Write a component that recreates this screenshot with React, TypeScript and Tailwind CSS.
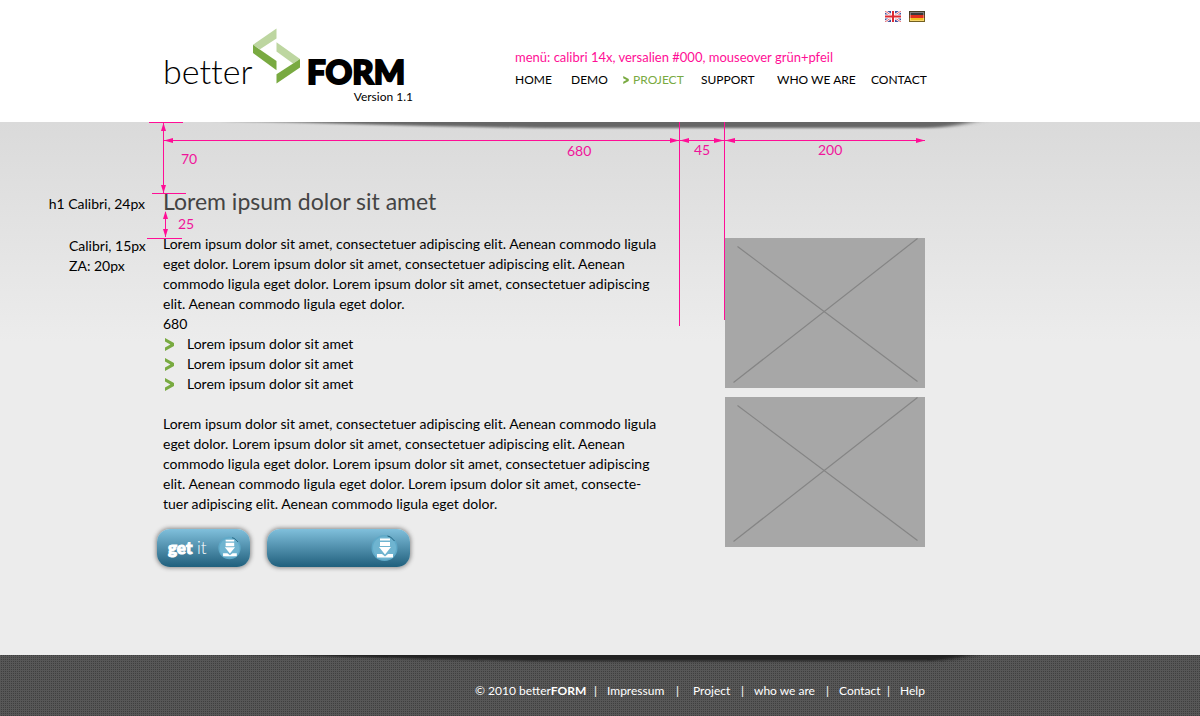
import type { ReactNode } from "react";

const PINK = "#ff0e96";

function Logo() {
  return (
    <a href="#home" aria-label="betterFORM" className="block text-black">
      <div className="flex items-end text-[34px] leading-[34px]">
        <span className="w-[90px] font-light whitespace-nowrap [font-variant-ligatures:none]">better</span>
        <svg viewBox="0 0 47 56" className="mb-[4px] h-[56px] w-[47px] shrink-0" aria-hidden="true">
          <path d="M23.5 0.5V10.5L7 21.2L0 16.8Z" fill="#bdd6a0" />
          <path d="M0 16.8L23.5 33V42.2L0 25Z" fill="#79aa41" />
          <path d="M23.5 14.2L47 31L40 35.5L23.5 23.5Z" fill="#bdd6a0" />
          <path d="M47 31V39.5L23.5 55.5V46.2Z" fill="#79aa41" />
        </svg>
        <span className="ml-[7px] text-[33px] font-black [-webkit-text-stroke:2px_#000]">FORM</span>
      </div>
      <div className="text-right text-[12px] leading-[18px]">Version 1.1</div>
    </a>
  );
}

function BritishFlag() {
  return (
    <svg viewBox="0 0 16 11" className="h-[11px] w-[16px]" aria-hidden="true">
      <rect width="16" height="11" fill="#3f4f9e" />
      <path d="M0 0L16 11M16 0L0 11" stroke="#fff" strokeWidth="2.4" />
      <path d="M0 0L16 11M16 0L0 11" stroke="#e0404a" strokeWidth="0.8" />
      <path d="M8 0V11M0 5.5H16" stroke="#fff" strokeWidth="4" />
      <path d="M8 0V11M0 5.5H16" stroke="#dd2a33" strokeWidth="2" />
    </svg>
  );
}

function GermanFlag() {
  return (
    <svg viewBox="0 0 16 11" className="h-[11px] w-[16px]" aria-hidden="true">
      <rect width="16" height="4" fill="#3a3a3a" />
      <rect y="4" width="16" height="3" fill="#e0301c" />
      <rect y="7" width="16" height="4" fill="#f0c020" />
      <rect x="0.5" y="0.5" width="15" height="10" fill="none" stroke="#4a4020" strokeOpacity="0.75" />
      <rect x="1.5" y="1.5" width="13" height="8" fill="none" stroke="#fff" strokeOpacity="0.35" />
    </svg>
  );
}

function Chevron({ className }: { className: string }) {
  return (
    <svg viewBox="0 0 9 13" className={className} aria-hidden="true">
      <path d="M0 0L9 5V8L0 13V9.4L5.4 6.5L0 3.6Z" fill="#79aa41" />
    </svg>
  );
}

function EdgeShadow({ id, color }: { id: string; color: string }) {
  return (
    <svg viewBox="0 0 1200 12" className="pointer-events-none absolute top-0 left-0 h-[12px] w-[1200px]" aria-hidden="true">
      <defs>
        <filter id={id} x="-5%" y="-100%" width="110%" height="300%">
          <feGaussianBlur stdDeviation="8 1" />
        </filter>
      </defs>
      <path d="M225 -8V-1L300 0.5Q400 4 540 6H930Q955 5 975 -1V-8Z" fill={color} filter={"url(#" + id + ")"} />
    </svg>
  );
}

function Dimensions() {
  return (
    <div className="pointer-events-none absolute top-0 left-0 text-[14px] leading-[20px] text-[#f0149a]">
      <svg viewBox="0 0 940 210" className="h-[210px] w-[940px]" aria-hidden="true">
        <g stroke={PINK} fill="none" shapeRendering="crispEdges">
          <path d="M149 0.5H183M152 71.5H186M147 116.5H182" />
          <path d="M163.5 1V71M165.5 90V115M163 18.5H925" />
          <path d="M679.5 0V204" />
          <path d="M724.5 0V198" />
        </g>
        <g fill={PINK}>
          <path d="M163.5 1L166 9H161ZM163.5 71L166 63H161Z" />
          <path d="M165.5 89L168 97H163ZM165.5 115L168 107H163Z" />
          <path d="M164 18.5L173 16V21ZM679 18.5L670 16V21Z" />
          <path d="M680 18.5L689 16V21ZM724 18.5L714 16V21Z" />
          <path d="M725 18.5L735 16V21ZM925 18.5L916 16V21Z" />
        </g>
      </svg>
      <span className="absolute top-[27px] left-[181px]">70</span>
      <span className="absolute top-[92px] left-[178px]">25</span>
      <span className="absolute top-[19px] left-[567px]">680</span>
      <span className="absolute top-[18px] left-[694px]">45</span>
      <span className="absolute top-[18px] left-[818px]">200</span>
    </div>
  );
}

function Placeholder() {
  return (
    <svg viewBox="0 0 200 150" className="block h-[150px] w-[200px] bg-[#a7a7a7]" role="img" aria-label="Placeholder">
      <path d="M12.5 8.5L192.5 143.5M8.5 144.5L192.5 0.5" stroke="#858585" strokeWidth="1.2" />
    </svg>
  );
}

function DownloadIcon({ className }: { className: string }) {
  return (
    <svg viewBox="0 0 26 28" className={className} aria-hidden="true">
      <circle cx="13" cy="14" r="13" fill="#5fa9c8" />
      <circle cx="13" cy="14" r="11.5" fill="#6fb4d0" />
      <path d="M16 2L19 3L23 7" stroke="#245f7a" strokeWidth="1" fill="none" />
      <path
        d="M8.5 4.5H18.5V6.5H8.5ZM8.5 8H18.5V12H8.5ZM7.5 13H19.5L13.5 20.5ZM5.5 20H10.5L13.5 22.5L16.5 20H21.5V23.5H5.5Z"
        fill="#fff"
      />
    </svg>
  );
}

function PillButton({ label, className, children }: { label: string; className: string; children: ReactNode }) {
  return (
    <button
      type="button"
      aria-label={label}
      className={
        "flex h-[38px] items-center rounded-[13px] bg-linear-to-b from-[#80c0dc] to-[#1f607d] text-white shadow-[0_0_4px_1px_#8a8a8a] " +
        className
      }
    >
      {children}
    </button>
  );
}

const navLinks = ["HOME", "DEMO", "PROJECT", "SUPPORT", "WHO WE ARE", "CONTACT"];
const listItems = [1, 2, 3];

export default function App() {
  return (
    <div className="flex min-h-screen flex-col overflow-x-hidden bg-[#ececec] font-['Lato','Liberation_Sans',sans-serif] text-black">
      <header className="h-[122px] bg-white">
        <div className="flex max-w-[925px] justify-between pl-[163px]">
          <div className="w-[250px] shrink-0 pt-[28px]">
            <Logo />
          </div>
          <div className="w-[410px] shrink-0 pt-[11px]">
            <div className="flex justify-end gap-[8px]">
              <a href="#en" aria-label="English">
                <BritishFlag />
              </a>
              <a href="#de" aria-label="Deutsch">
                <GermanFlag />
              </a>
            </div>
            <p className="mt-[24px] text-[13px] leading-[22px] whitespace-nowrap text-[#ff0e96]">
              menü: calibri 14x, versalien #000, mouseover grün+pfeil
            </p>
            <nav className="grid grid-cols-[56px_52px_78px_76px_94px_54px] text-[12px] leading-[24px] whitespace-nowrap">
              {navLinks.map((name) =>
                name === "PROJECT" ? (
                  <a key={name} href="#project" className="flex items-center gap-[4px] text-[#79aa41]">
                    <Chevron className="h-[8px] w-[6px]" />
                    {name}
                  </a>
                ) : (
                  <a key={name} href="#page">
                    {name}
                  </a>
                ),
              )}
            </nav>
          </div>
        </div>
      </header>

      <main className="relative flex-1 bg-[linear-gradient(#dadada,#ececec_220px)] pb-[88px]">
        <EdgeShadow id="top-shadow" color="#666666" />
        <div className="grid max-w-[925px] grid-cols-[163px_1fr_200px] pt-[66px] text-[14px] leading-[20px]">
          <p className="pt-[6px] pr-[18px] text-right">h1 Calibri, 24px</p>
          <h1 className="col-span-2 h-[46px] text-[23px] leading-[26px] text-[#444444]">Lorem ipsum dolor sit amet</h1>

          <p className="pt-[2px] pl-[69px]">
            Calibri, 15px
            <br />
            ZA: 20px
          </p>
          <div className="whitespace-nowrap">
            <p>
              Lorem ipsum dolor sit amet, consectetuer adipiscing elit. Aenean commodo ligula
              <br />
              eget dolor. Lorem ipsum dolor sit amet, consectetuer adipiscing elit. Aenean
              <br />
              commodo ligula eget dolor. Lorem ipsum dolor sit amet, consectetuer adipiscing
              <br />
              elit. Aenean commodo ligula eget dolor.
              <br />
              680
            </p>
            <ul>
              {listItems.map((n) => (
                <li key={n} className="flex items-center gap-[13px] pl-[2px]">
                  <Chevron className="h-[13px] w-[9px]" />
                  Lorem ipsum dolor sit amet
                </li>
              ))}
            </ul>
            <p className="mt-[20px]">
              Lorem ipsum dolor sit amet, consectetuer adipiscing elit. Aenean commodo ligula
              <br />
              eget dolor. Lorem ipsum dolor sit amet, consectetuer adipiscing elit. Aenean
              <br />
              commodo ligula eget dolor. Lorem ipsum dolor sit amet, consectetuer adipiscing
              <br />
              elit. Aenean commodo ligula eget dolor. Lorem ipsum dolor sit amet, consecte-
              <br />
              tuer adipiscing elit. Aenean commodo ligula eget dolor.
            </p>
            <div className="mt-[15px] -ml-[6px] flex gap-[17px]">
              <PillButton label="get it" className="w-[93px] justify-between pr-[9px] pl-[11px]">
                <span className="text-[17px] leading-[20px] font-light">
                  <b className="font-black [-webkit-text-stroke:1px_#fff]">get</b> it
                </span>
                <DownloadIcon className="h-[24px] w-[23px]" />
              </PillButton>
              <PillButton label="Download" className="w-[143px] justify-end pr-[12px]">
                <DownloadIcon className="h-[28px] w-[27px]" />
              </PillButton>
            </div>
          </div>
          <div className="flex flex-col gap-[9px] pt-[4px]">
            <Placeholder />
            <Placeholder />
          </div>
        </div>
        <Dimensions />
      </main>

      <footer className="relative h-[61px] bg-[conic-gradient(#3f3f3f_25%,#575757_0)] bg-[size:2px_2px] text-[12px] leading-[16px] text-white">
        <EdgeShadow id="bottom-shadow" color="#202020" />
        <nav className="grid max-w-[925px] grid-cols-[119px_13px_69px_17px_48px_13px_72px_13px_48px_13px_25px] justify-end pt-[28px] whitespace-nowrap">
          <span>
            © 2010 better<b>FORM</b>
          </span>
          <span>|</span>
          <a href="#impressum">Impressum</a>
          <span>|</span>
          <a href="#project">Project</a>
          <span>|</span>
          <a href="#about">who we are</a>
          <span>|</span>
          <a href="#contact">Contact</a>
          <span>|</span>
          <a href="#help">Help</a>
        </nav>
      </footer>
    </div>
  );
}
